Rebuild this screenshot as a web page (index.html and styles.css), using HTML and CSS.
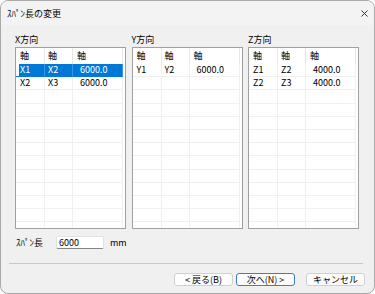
FILE: index.html
```html
<!DOCTYPE html>
<html lang="ja">
<head>
    <meta charset="UTF-8">
    <meta name="viewport" content="width=device-width, initial-scale=1.0">
    <title>ｽﾊﾟﾝ長の変更</title>
    <link rel="stylesheet" href="styles.css">
</head>
<body>
    <div class="window">
        <div class="titlebar">
            <span class="title">ｽﾊﾟﾝ長の変更</span>
            <svg class="close" width="7" height="7" viewBox="0 0 7 7">
                <path d="M0.5 0.5 L6.5 6.5 M6.5 0.5 L0.5 6.5" stroke="#222" stroke-width="0.9" fill="none"/>
            </svg>
        </div>

        <div class="content">
            <div class="lists">
                <div class="group">
                    <div class="group-label">X方向</div>
                    <div class="list">
                        <div class="row head"><span>軸</span><span>軸</span><span>軸</span></div>
                        <div class="row sel"><span>X1</span><span>X2</span><span class="num">6000.0</span></div>
                        <div class="row"><span>X2</span><span>X3</span><span class="num">6000.0</span></div>
                    </div>
                </div>
                <div class="group">
                    <div class="group-label">Y方向</div>
                    <div class="list">
                        <div class="row head"><span>軸</span><span>軸</span><span>軸</span></div>
                        <div class="row"><span>Y1</span><span>Y2</span><span class="num">6000.0</span></div>
                    </div>
                </div>
                <div class="group">
                    <div class="group-label">Z方向</div>
                    <div class="list">
                        <div class="row head"><span>軸</span><span>軸</span><span>軸</span></div>
                        <div class="row"><span>Z1</span><span>Z2</span><span class="num">4000.0</span></div>
                        <div class="row"><span>Z2</span><span>Z3</span><span class="num">4000.0</span></div>
                    </div>
                </div>
            </div>

            <div class="span-row">
                <label for="spanLength">ｽﾊﾟﾝ長</label>
                <input id="spanLength" type="text" value="6000">
                <span class="unit">mm</span>
            </div>
        </div>

        <div class="separator"></div>

        <div class="buttons">
            <button>&lt; 戻る(B)</button>
            <button class="default">次へ(N) &gt;</button>
            <button class="cancel">キャンセル</button>
        </div>
    </div>

    <script>
        document.addEventListener('DOMContentLoaded', () => {
            // fill each list with empty rows so the grid lines reach the bottom
            document.querySelectorAll('.list').forEach(list => {
                while (list.children.length < 15) {
                    const row = document.createElement('div');
                    row.className = 'row';
                    row.innerHTML = '<span></span><span></span><span></span>';
                    list.appendChild(row);
                }
            });
        });
    </script>
</body>
</html>
```

FILE: styles.css
```css
* {
    box-sizing: border-box;
}
body {
    margin: 0;
    background-color: #fff;
    font-family: "Noto Sans CJK JP", "Liberation Sans", sans-serif;
    font-size: 9px;
    color: #000;
}
.window {
    width: 375px;
    height: 294px;
    border: 1px solid #a9a9a9;
    border-radius: 8px;
    background-color: #f0f0f0;
    overflow: hidden;
    display: flex;
    flex-direction: column;
}
.titlebar {
    height: 24px;
    padding: 0 6px 0 6px;
    display: flex;
    align-items: center;
    justify-content: space-between;
    background-color: #f3f3f3;
}
.title {
    line-height: 11px;
}
.close {
    display: block;
}
.content {
    padding: 9px 15px 0 14px;
}
.lists {
    display: grid;
    grid-template-columns: repeat(3, 1fr);
    column-gap: 5.5px;
}
.group-label {
    line-height: 11px;
    height: 11px;
    margin-bottom: 2px;
}
.list {
    height: 182px;
    border: 1px solid #a0a0a0;
    background-color: #fff;
    overflow: hidden;
}
.row {
    display: grid;
    grid-template-columns: 29px 28px 50px;
    height: 13.2px;
    line-height: 12px;
}
.row span {
    border-right: 1px solid #f0f0f0;
    border-bottom: 1px solid #f0f0f0;
    padding-left: 4px;
    white-space: nowrap;
}
.row span:nth-child(2) {
    padding-left: 3px;
}
.row span.num {
    padding-left: 7px;
}
.row.head {
    height: 16px;
    line-height: 15px;
}
.row.head span {
    border-bottom: none;
    border-right-color: #e8e8e8;
}
.row.sel span {
    background-color: #0078d7;
    color: #fff;
    border-right-color: #3d95e0;
    border-bottom-color: #0078d7;
}
.row.sel span:first-child {
    background: linear-gradient(90deg, #fff 3px, #0078d7 3px);
}
.span-row {
    display: flex;
    align-items: center;
    margin-top: 7px;
    height: 13px;
    padding-left: 1px;
}
.span-row label {
    width: 40px;
}
.span-row input {
    width: 48px;
    height: 13px;
    padding: 0 2px;
    border: 1px solid #e2e2e2;
    border-bottom-color: #868686;
    border-radius: 2px;
    background-color: #fff;
    font-family: inherit;
    font-size: 9px;
    outline: none;
}
.unit {
    margin-left: 6px;
}
.separator {
    height: 1px;
    margin: 14px 11px 0 8px;
    background-color: #c8c8c8;
}
.buttons {
    display: flex;
    justify-content: flex-end;
    gap: 3px;
    margin-top: 9px;
    padding-right: 9px;
}
button {
    width: 59px;
    height: 13px;
    padding: 0;
    border: 1px solid #d0d0d0;
    border-radius: 3px;
    background-color: #fdfdfd;
    font-family: inherit;
    font-size: 9px;
    line-height: 11px;
    color: #000;
}
button.default {
    border-color: #3c7fc8;
}
button.cancel {
    margin-left: 8px;
}
```
